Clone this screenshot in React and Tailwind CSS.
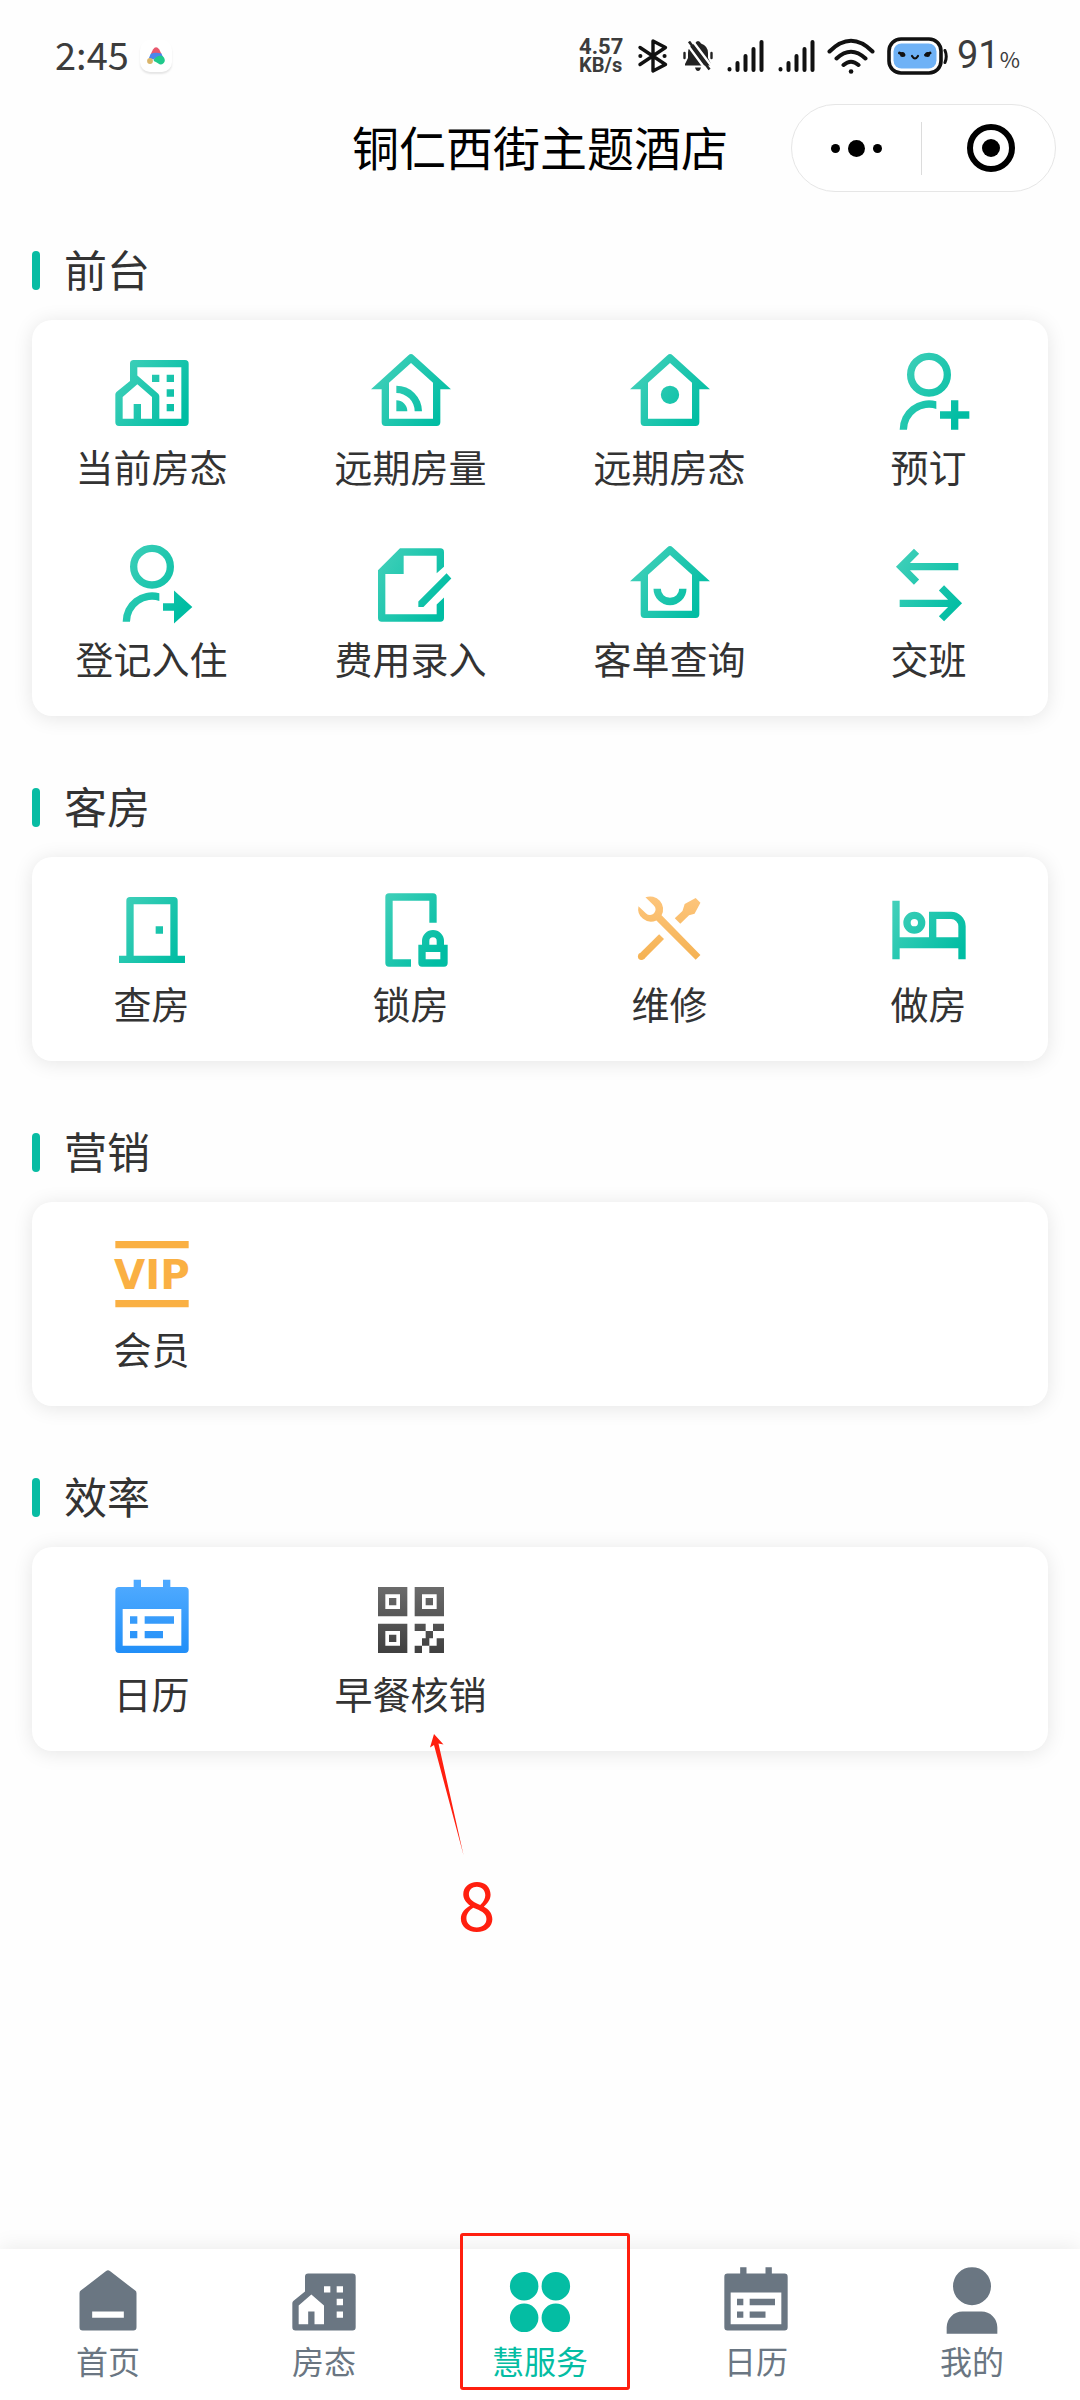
import React from "react";

const HOUSE =
  "M12.7 1.7a1 1 0 0 0-1.4 0L1.1 11H4v9a1 1 0 0 0 1 1h14a1 1 0 0 0 1-1v-9h2.9zM12 3.8l6 5.4V19H6V9.2z";
const BUILDING_OUTER =
  "M7 3h14a1 1 0 0 1 1 1v16a1 1 0 0 1-1 1H3a1 1 0 0 1-1-1v-7.6a1 1 0 0 1 .3-.7L6 8.7V4a1 1 0 0 1 1-1z";
const BUILDING_ROOM = "M8 9.6l4 3.5V19H9v-4H7v4H4v-5.9z";
const CALENDAR =
  "M7 1h2v2h6V1h2v2h4a1 1 0 0 1 1 1v16a1 1 0 0 1-1 1H3a1 1 0 0 1-1-1V4a1 1 0 0 1 1-1h4zM4 9v10h16V9zM6 11h2v2H6zM10 11h8v2h-8zM6 15h2v2H6zM10 15h5v2h-5z";

const GRADIENTS = {
  teal: { stops: ["#45d1bb", "#00bda3"], x2: 22, y2: 16 },
  orange: { stops: ["#fdc57c", "#f4b04e"], x2: 2, y2: 22 },
  amber: { stops: ["#fab043", "#fab043"], x2: 2, y2: 22 },
  blue: { stops: ["#4da9ff", "#1f8df7"], x2: 2, y2: 22 },
  dark: { stops: ["#6b6b6b", "#3d3d3d"], x2: 2, y2: 22 },
};

function GradientIcon({ name, tone, children }) {
  const g = GRADIENTS[tone];
  const id = `grad-${name}`;
  return (
    <svg viewBox="0 0 24 24" className="h-[88px] w-[88px]" fill={`url(#${id})`} fillRule="evenodd" aria-hidden="true">
      <defs>
        <linearGradient id={id} gradientUnits="userSpaceOnUse" x1="2" y1="3" x2={g.x2} y2={g.y2}>
          <stop stopColor={g.stops[0]} />
          <stop offset="1" stopColor={g.stops[1]} />
        </linearGradient>
      </defs>
      {children(`url(#${id})`)}
    </svg>
  );
}

const personBody = (paint) => (
  <>
    <circle cx="12" cy="7" r="5" fill="none" stroke={paint} strokeWidth="2" />
    <path d="M4 22a8 8 0 0 1 10-7.75v2.1A6 6 0 0 0 6 22z" />
  </>
);

const ICONS = {
  building: () => (
    <path
      d={`${BUILDING_OUTER}M8 5v2.2l5.7 5a1 1 0 0 1 .3.7V19h6V5z${BUILDING_ROOM}M12 7h2v2h-2zM16 7h2v2h-2zM16 11h2v2h-2zM16 15h2v2h-2z`}
    />
  ),
  houseSignal: () => <path d={`${HOUSE}M8 10a7 7 0 0 1 7 7h-2a5 5 0 0 0-5-5zM8 14a3 3 0 0 1 3 3H8z`} />,
  houseDot: () => <path d={`${HOUSE}M12 10a2.5 2.5 0 0 1 0 5a2.5 2.5 0 0 1 0-5z`} />,
  houseSmile: () => <path d={`${HOUSE}M7.5 13h2a2.5 2.5 0 0 0 5 0h2a4.5 4.5 0 0 1-9 0z`} />,
  personPlus: (p) => (
    <>
      {personBody(p)}
      <path d="M18 14h2v3h3v2h-3v3h-2v-3h-3v-2h3z" />
    </>
  ),
  personArrow: (p) => (
    <>
      {personBody(p)}
      <path d="M15 17h3v-3.5l5 4.5-5 4.5V19h-3z" />
    </>
  ),
  noteEdit: () => (
    <path d="M9 2h11a1 1 0 0 1 1 1v4l-2 1.8V4h-9v5H5v11h14v-2.7l2-1.9V21a1 1 0 0 1-1 1H4a1 1 0 0 1-1-1V8zM21.7 8.8L23 10.2 15.4 18H14v-1.5z" />
  ),
  swap: (p) => (
    <g fill="none" stroke={p} strokeWidth="2">
      <path d="M8.6 2.8L4.4 7l4.2 4.2M5 7h15M15.4 12.8l4.2 4.2-4.2 4.2M19 17H4" />
    </g>
  ),
  door: () => <path d="M6 3h12a1 1 0 0 1 1 1v15h2v2H3v-2h2V4a1 1 0 0 1 1-1zM7 5v14h10V5zM13 11h2v2h-2z" />,
  doorLock: () => (
    <path d="M6 2h12a1 1 0 0 1 1 1v7h-2V4H7v16h5v2H6a1 1 0 0 1-1-1V3a1 1 0 0 1 1-1zM15 16v-1a3 3 0 0 1 6 0v1h1v5a1 1 0 0 1-1 1h-6a1 1 0 0 1-1-1v-5zM17 16h2v-1a1 1 0 0 0-2 0zM16 18v2h4v-2z" />
  ),
  tools: (p) => (
    <>
      <path d="M5.3 3.1A3.5 3.5 0 0 1 9.7 8l10.6 10.8-1.3 1.3L8.3 9.4A3.5 3.5 0 0 1 3.4 5.5l2.1 2a1.5 1.5 0 0 0 2.1-2.2z" />
      <path d="M19 3.3l1.3 1.3-1.6 3-1.5.4-2.4 2.3-1.5-1.5 2.1-2 .6-1.9z" />
      <path d="M9.7 13.8l-5.5 5.5" stroke={p} strokeWidth="1.9" />
      <circle cx="4.2" cy="19.2" r=".95" />
    </>
  ),
  bed: () => (
    <path d="M2 4h2v10h8V7h6a4 4 0 0 1 4 4v9h-2v-3H4v3H2zM14 9v5h6v-3a2 2 0 0 0-2-2zM8 7a3 3 0 0 1 0 6a3 3 0 0 1 0-6zM8 9a1 1 0 0 0 0 2a1 1 0 0 0 0-2z" />
  ),
  vip: () => (
    <>
      <path d="M2 2.700h20v2H2zM2 18.800h20v2H2z" />
      <text x="12" y="15.7" fontSize="11" fontWeight="700" fontFamily="DejaVu Sans, sans-serif" textAnchor="middle">
        VIP
      </text>
    </>
  ),
  calendar: () => <path d={CALENDAR} />,
  qr: () => (
    <path d="M3 3h8v8H3zM5 5v4h4V5zM6 6h2v2H6zM13 3h8v8h-8zM15 5v4h4V5zM16 6h2v2h-2zM3 13h8v8H3zM5 15v4h4v-4zM6 16h2v2H6zM13 13h3v2h2v-2h3v2h-3v2h-1v2h2v-2h2v4h-4v-2h-2v2h-2v-2h2v-2h1v-2h-3z" />
  ),
};

const SECTIONS = [
  {
    title: "前台",
    items: [
      ["当前房态", "building", "teal"],
      ["远期房量", "houseSignal", "teal"],
      ["远期房态", "houseDot", "teal"],
      ["预订", "personPlus", "teal"],
      ["登记入住", "personArrow", "teal"],
      ["费用录入", "noteEdit", "teal"],
      ["客单查询", "houseSmile", "teal"],
      ["交班", "swap", "teal"],
    ],
  },
  {
    title: "客房",
    items: [
      ["查房", "door", "teal"],
      ["锁房", "doorLock", "teal"],
      ["维修", "tools", "orange"],
      ["做房", "bed", "teal"],
    ],
  },
  { title: "营销", items: [["会员", "vip", "amber"]] },
  {
    title: "效率",
    items: [
      ["日历", "calendar", "blue"],
      ["早餐核销", "qr", "dark", "8"],
    ],
  },
];

const TABS = [
  {
    label: "首页",
    d: "M11.4 2.2a1 1 0 0 1 1.2 0l8 6.2a1 1 0 0 1 .4.8V20a1 1 0 0 1-1 1H4a1 1 0 0 1-1-1V9.2a1 1 0 0 1 .4-.8zM7 15v2h10v-2z",
  },
  { label: "房态", d: `${BUILDING_OUTER}${BUILDING_ROOM}M12 7v2h2V7zM16 7v2h2V7zM16 11v2h2v-2zM16 15v2h2v-2z` },
  {
    label: "慧服务",
    active: true,
    d: "M7 2.5a4.5 4.5 0 0 1 0 9a4.5 4.5 0 0 1 0-9zM17 2.5a4.5 4.5 0 0 1 0 9a4.5 4.5 0 0 1 0-9zM7 12.5a4.5 4.5 0 0 1 0 9a4.5 4.5 0 0 1 0-9zM17 12.5a4.5 4.5 0 0 1 0 9a4.5 4.5 0 0 1 0-9z",
  },
  { label: "日历", d: CALENDAR },
  { label: "我的", d: "M12 1a6 6 0 0 1 0 12a6 6 0 0 1 0-12zM9 15h6a5 5 0 0 1 5 5v2H4v-2a5 5 0 0 1 5-5z" },
];

function SignalBars() {
  return (
    <svg viewBox="0 0 37 34" className="h-[34px] w-[37px]" stroke="#111" strokeWidth="4" strokeLinecap="round" aria-hidden="true">
      <path d="M2.5 30v.5M10.5 24v7M18.5 17v14M26.5 10v21M34.5 3v28" />
    </svg>
  );
}

function StatusBar() {
  return (
    <div className="flex h-[104px] items-center pt-2 pr-[60px] pl-[55px] text-[#3c3c3c]">
      <span className="pb-1 text-[38px] leading-[40px]">2:45</span>
      <span className="ml-[11px] flex h-8 w-8 items-center justify-center rounded-[10px] bg-white shadow-[0_2px_2px_rgba(0,0,0,0.1)]">
        <svg viewBox="0 0 18 18" className="h-[18px] w-[18px]" aria-hidden="true">
          <path d="M6 2.5Q9-2 12.3 2.5L14.5 7H3.8z" fill="#e8586d" />
          <path d="M3.6 7Q8 4.5 14.4 6.6L16 10Q9 9.500 7 12.500L1.800 11.500z" fill="#4a86ec" />
          <circle cx="3" cy="14" r="2.9" fill="#d9b46a" />
          <path d="M6.800 12.500Q10 8 14.500 8.800Q18 10 17.800 14Q16.500 18 12.500 17.300Q9 15 6.800 14z" fill="#1fc98b" />
        </svg>
      </span>
      <div className="ml-auto flex items-center">
        <span className="flex w-[48px] flex-col font-[Roboto] font-bold">
          <span className="text-[22px] leading-[18px]">4.57</span>
          <span className="text-[20px] leading-[18px]">KB/s</span>
        </span>
        <svg viewBox="0 0 32 36" className="ml-[10px] h-9 w-8" fill="none" stroke="#111" strokeWidth="3.4" strokeLinejoin="round" strokeLinecap="round" aria-hidden="true">
          <path d="M3 9.500L28.500 26.500 16 33V3l12.500 6.500L3 26.500" />
          <path d="M3.300 18h.1M27.500 18h.1" strokeWidth="4" />
        </svg>
        <svg viewBox="0 0 30 30" className="ml-[14px] h-[30px] w-[30px]" fill="#222" aria-hidden="true">
          <path d="M12 2.500Q13 0 15 0t3 2.500Q25 5 25 12v5l3 6v1.500H2V23l3-6v-5Q5 5 12 2.500z" />
          <path d="M12 26.500h6Q17 30 15 30t-3-3.500z" />
          <path d="M1.500 12v5M28.500 12v5" stroke="#222" strokeWidth="2.400" strokeLinecap="round" />
          <path d="M2 .5L24.500 31M10 .5L30 27" stroke="#fff" strokeWidth="2.400" />
          <path d="M6 .5L26.500 28.500" stroke="#222" strokeWidth="2.600" />
        </svg>
        <span className="ml-[14px]"><SignalBars /></span>
        <span className="ml-[14px]"><SignalBars /></span>
        <svg viewBox="0 0 48 36" className="ml-3 h-9 w-12" fill="none" stroke="#111" strokeWidth="4" strokeLinecap="round" aria-hidden="true">
          <path d="M2.500 13.500Q24-8 45.500 13.500M9.500 20.500Q24 7 38.500 20.500M16.500 27Q24 20.500 31.500 27" />
          <path d="M24 33.500h.1" strokeWidth="4.500" />
        </svg>
        <svg viewBox="0 0 62 38" className="ml-3 h-[38px] w-[62px]" fill="none" stroke="#111" strokeLinecap="round" aria-hidden="true">
          <rect x="2" y="2" width="52" height="34" rx="12" strokeWidth="3.600" />
          <rect x="6.500" y="6.500" width="43" height="25" rx="8" fill="#6fb2f6" stroke="none" />
          <path d="M58 13.500q2.500 6 0 12" strokeWidth="3" />
          <path d="M12.500 16l4.500 2M43 16l-4.500 2" strokeWidth="3" />
          <circle cx="15.500" cy="17.500" r="2.500" fill="#111" stroke="none" />
          <circle cx="40.500" cy="17.500" r="2.500" fill="#111" stroke="none" />
          <path d="M25 19q3 5 6 0" strokeWidth="2.200" />
        </svg>
        <span className="ml-2 flex items-baseline leading-[40px]">
          <span className="font-[Roboto] text-[38px]">91</span>
          <span className="text-[22px]">%</span>
        </span>
      </div>
    </div>
  );
}

function TitleBar() {
  return (
    <header className="grid h-[88px] grid-cols-[1fr_auto_1fr] items-center pr-6">
      <h1 className="col-start-2 pb-1 pl-6 text-[47px] leading-[60px] text-black">铜仁西街主题酒店</h1>
      <div className="flex h-[88px] w-[265px] items-center justify-self-end rounded-full border border-[#e6e6e6] bg-white">
        <button type="button" aria-label="更多" className="flex flex-1 items-center justify-center gap-2">
          <span className="h-[9px] w-[9px] rounded-full bg-black" />
          <span className="h-[17px] w-[17px] rounded-full bg-black" />
          <span className="h-[9px] w-[9px] rounded-full bg-black" />
        </button>
        <span className="h-[53px] w-px bg-[#dcdcdc]" />
        <button type="button" aria-label="关闭" className="flex flex-1 items-center justify-center pl-1">
          <span className="flex h-12 w-12 items-center justify-center rounded-full border-[6px] border-black">
            <span className="h-[18px] w-[18px] rounded-full bg-black" />
          </span>
        </button>
      </div>
    </header>
  );
}

function Callout({ children }) {
  return (
    <span className="pointer-events-none absolute top-[158px] left-[calc(50%+18px)] flex w-24 flex-col text-[#ff1f0f]">
      <svg viewBox="0 0 36 122" className="h-[122px] w-9" fill="currentColor" aria-hidden="true">
        <path d="M5 0L14.500 10.500 9.500 9.500 34.500 121 5 11 1 13.500z" />
      </svg>
      <span className="text-center text-[68px] leading-[92px]">{children}</span>
    </span>
  );
}

function Section({ title, items }) {
  return (
    <section className="mb-[61px]">
      <h2 className="flex items-center gap-6 text-[43px] leading-[56px]">
        <span className="h-[39px] w-2 rounded-full bg-[#08bca3]" />
        <span className="pb-1">{title}</span>
      </h2>
      <div className="mt-5 grid grid-cols-4 gap-x-5 gap-y-[46px] rounded-[20px] bg-white pt-[29px] pb-[29px] shadow-[0_2px_20px_rgba(0,0,0,0.1)]">
        {items.map(([label, icon, tone, callout]) => (
          <button key={label} type="button" className="relative flex flex-col items-center">
            <GradientIcon name={icon} tone={tone}>{ICONS[icon]}</GradientIcon>
            <span className="text-[38px] leading-[58px] whitespace-nowrap">{label}</span>
            {callout && <Callout>{callout}</Callout>}
          </button>
        ))}
      </div>
    </section>
  );
}

function TabBar() {
  return (
    <nav className="grid grid-cols-5 bg-white pt-[15px] pb-5 shadow-[0_-2px_20px_rgba(0,0,0,0.08)]">
      {TABS.map(({ label, d, active }) => (
        <a
          key={label}
          href="#"
          aria-current={active ? "page" : undefined}
          className={`relative flex flex-col items-center ${active ? "text-[#04bda3]" : "text-[#6a7682]"}`}
        >
          <svg viewBox="0 0 24 24" className="h-[76px] w-[76px]" fill="currentColor" fillRule="evenodd" aria-hidden="true">
            <path d={d} />
          </svg>
          <span className="text-[32px] leading-[40px]">{label}</span>
          {active && <span className="pointer-events-none absolute -top-[31px] right-[18px] -bottom-[10px] left-7 rounded-[3px] border-[3px] border-[#ff1f0f]" />}
        </a>
      ))}
    </nav>
  );
}

export default function App() {
  return (
    <div className="flex min-h-screen flex-col bg-[#fefefe] font-['Noto_Sans_CJK_SC',sans-serif] text-[#333]">
      <StatusBar />
      <TitleBar />
      <main className="flex-1 px-8 pt-12">
        {SECTIONS.map((s) => (
          <Section key={s.title} {...s} />
        ))}
      </main>
      <TabBar />
    </div>
  );
}
